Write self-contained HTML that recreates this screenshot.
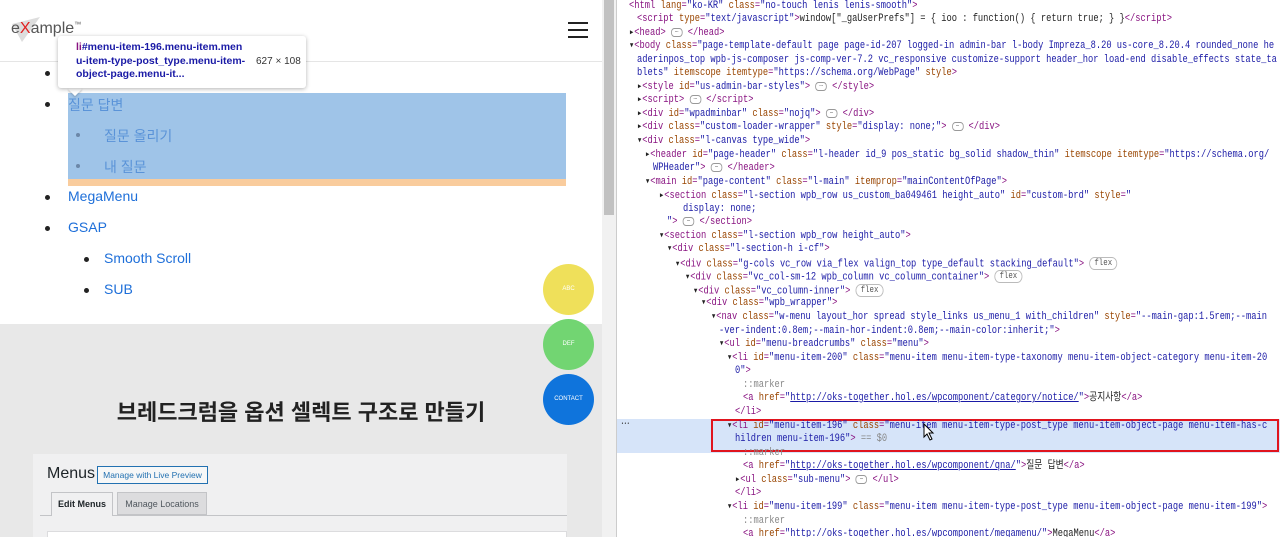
<!DOCTYPE html>
<html><head><meta charset="utf-8"><style>
*{margin:0;padding:0;box-sizing:border-box}
body{width:1280px;height:537px;overflow:hidden;position:relative;background:#fff;font-family:"Liberation Sans","Noto Sans CJK KR",sans-serif}
#left{position:absolute;left:0;top:0;width:602px;height:537px;background:#fff;overflow:hidden}
#sb{position:absolute;left:602px;top:0;width:14px;height:537px;background:#f1f1f1}
#sb div{position:absolute;left:2px;top:0;width:10px;height:215px;background:#c1c1c1}
#dt{position:absolute;left:616px;top:0;width:664px;height:537px;background:#fff;border-left:1px solid #ccc;font-family:"Liberation Mono","Noto Sans CJK KR",monospace;font-size:10.6px;color:#881280;overflow:hidden}
.l{position:absolute;white-space:pre;height:13.6px;line-height:13.6px;transform:scaleX(.825);transform-origin:0 0}
.a{color:#994500}.v{color:#1a1aa6}.t{color:#881280}.k{color:#222}.u{color:#1a1aa6;text-decoration:underline}
.li{position:absolute;left:68px;font-size:14px;color:#1e6fd9}
.bu{position:absolute;width:5px;height:5px;border-radius:50%;background:#222}
.c{position:absolute;width:51px;height:51px;border-radius:50%;color:#fff;font-size:6px;text-align:center;line-height:51px}
.fl{display:inline-block;border:1px solid #bbb;border-radius:8px;font-size:9px;padding:0 5px;line-height:11px;color:#555;vertical-align:middle}
.dots{display:inline-block;width:14px;height:9px;border:1px solid #999;border-radius:4px;font-size:7px;line-height:5px;text-align:center;color:#333;vertical-align:middle}
</style></head><body>
<div id="left">
 <div style="position:absolute;left:0;top:0;width:602px;height:62px;border-bottom:1px solid #e5e5e5"></div>
 <svg style="position:absolute;left:10px;top:16px" width="32" height="28"><polygon points="2,8 30,1 12,26" fill="#ddd"/></svg>
 <div style="position:absolute;left:11px;top:20px;font-size:16px;color:#555">e<span style="color:#e02020">X</span>ample<sup style="font-size:7px">™</sup></div>
 <div style="position:absolute;left:568px;top:22px;width:20px;height:2px;background:#222"></div>
 <div style="position:absolute;left:568px;top:29px;width:20px;height:2px;background:#222"></div>
 <div style="position:absolute;left:568px;top:36px;width:20px;height:2px;background:#222"></div>
 <div style="position:absolute;left:68px;top:93px;width:498px;height:86px;background:#9fc4e8"></div>
 <div style="position:absolute;left:68px;top:179px;width:498px;height:7px;background:#f9cc9d"></div>
 <div class="bu" style="left:45px;top:71px"></div>
 <div class="bu" style="left:45px;top:102px"></div><div class="li" style="top:95px;color:#5a93d8">질문 답변</div>
 <div class="bu" style="left:76px;top:133px;background:#6b87a8;width:4px;height:4px"></div><div class="li" style="left:104px;top:126px;color:#5a93d8">질문 올리기</div>
 <div class="bu" style="left:76px;top:164px;background:#6b87a8;width:4px;height:4px"></div><div class="li" style="left:104px;top:157px;color:#5a93d8">내 질문</div>
 <div class="bu" style="left:45px;top:195px"></div><div class="li" style="top:188px">MegaMenu</div>
 <div class="bu" style="left:45px;top:226px"></div><div class="li" style="top:219px">GSAP</div>
 <div class="bu" style="left:84px;top:257px"></div><div class="li" style="left:104px;top:250px">Smooth Scroll</div>
 <div class="bu" style="left:84px;top:288px"></div><div class="li" style="left:104px;top:281px">SUB</div>
 <div style="position:absolute;left:70px;top:84px;width:10px;height:10px;background:#fff;transform:rotate(45deg);box-shadow:1px 1px 2px rgba(0,0,0,.2)"></div>
 <div style="position:absolute;left:58px;top:36px;width:248px;height:52px;background:#fff;border-radius:3px;box-shadow:0 1px 4px rgba(0,0,0,.3);font-size:10.5px;font-weight:bold;color:#1a1aa6;padding:5px 6px 0 18px;line-height:13.5px;white-space:nowrap">
  <div><span style="color:#881280">li</span>#menu-item-196.menu-item.men<br>u-item-type-post_type.menu-item-<br>object-page.menu-it...</div>
  <div style="position:absolute;left:198px;top:19px;font-weight:normal;color:#333;font-size:10px">627 × 108</div>
 </div>
 <div style="position:absolute;left:0;top:324px;width:602px;height:213px;background:#e8e8e8"></div>
 <div style="position:absolute;left:0;top:395px;width:602px;text-align:center;font-size:22px;font-weight:bold;color:#222">브레드크럼을 옵션 셀렉트 구조로 만들기</div>
 <div style="position:absolute;left:33px;top:454px;width:534px;height:90px;background:#f0f0f1"></div>
 <div style="position:absolute;left:47px;top:465px;font-size:16px;color:#1d2327">Menus</div>
 <div style="position:absolute;left:97px;top:466px;width:111px;height:18px;border:1px solid #2271b1;color:#2271b1;font-size:8.5px;line-height:16px;text-align:center;background:#f6f7f7;white-space:nowrap">Manage with Live Preview</div>
 <div style="position:absolute;left:40px;top:515px;width:527px;height:1px;background:#c3c4c7"></div>
 <div style="position:absolute;left:51px;top:492px;width:62px;height:24px;border:1px solid #c3c4c7;border-bottom:none;background:#f0f0f1;font-size:9px;font-weight:bold;color:#1d2327;text-align:center;line-height:23px;white-space:nowrap">Edit Menus</div>
 <div style="position:absolute;left:117px;top:492px;width:90px;height:23px;border:1px solid #c3c4c7;background:#dcdcde;font-size:9px;color:#50575e;text-align:center;line-height:22px;white-space:nowrap">Manage Locations</div>
 <div style="position:absolute;left:47px;top:531px;width:520px;height:10px;background:#fff;border:1px solid #dcdcde"></div>
 <div class="c" style="left:543px;top:264px;background:#efe05a">ABC</div>
 <div class="c" style="left:543px;top:319px;background:#72d572">DEF</div>
 <div class="c" style="left:543px;top:374px;background:#0f74dc">CONTACT</div>
</div>
<div id="sb"><div></div></div>
<div id="dt">
<div style="position:absolute;left:0;top:419px;width:664px;height:34px;background:#d6e4f9"></div>
<div style="position:absolute;left:94px;top:419px;width:568px;height:33px;border:2px solid #e0141e"></div>
<div class="l" style="left:4px;top:419px;color:#333">⋯</div>
<div class="l" style="left:12px;top:0"><span class="t">&lt;html</span> <span class="a">lang</span>=<span class="v">"ko-KR"</span> <span class="a">class</span>=<span class="v">"no-touch lenis lenis-smooth"</span><span class="t">&gt;</span></div>
<div class="l" style="left:20px;top:13px"><span class="t">&lt;script</span> <span class="a">type</span>=<span class="v">"text/javascript"</span><span class="t">&gt;</span><span class="k">window["_gaUserPrefs"] = { ioo : function() { return true; } }</span><span class="t">&lt;/script&gt;</span></div>
<div class="l" style="left:12px;top:27px"><span class="k">▸</span><span class="t">&lt;head&gt;</span> <span class="dots">…</span> <span class="t">&lt;/head&gt;</span></div>
<div class="l" style="left:12px;top:40px"><span class="k">▾</span><span class="t">&lt;body</span> <span class="a">class</span>=<span class="v">"page-template-default page page-id-207 logged-in admin-bar l-body Impreza_8.20 us-core_8.20.4 rounded_none he</span></div>
<div class="l" style="left:20px;top:54px"><span class="v">aderinpos_top wpb-js-composer js-comp-ver-7.2 vc_responsive customize-support header_hor load-end disable_effects state_ta</span></div>
<div class="l" style="left:20px;top:67px"><span class="v">blets"</span> <span class="a">itemscope</span> <span class="a">itemtype</span>=<span class="v">"https://schema.org/WebPage"</span> <span class="a">style</span><span class="t">&gt;</span></div>
<div class="l" style="left:20px;top:81px"><span class="k">▸</span><span class="t">&lt;style</span> <span class="a">id</span>=<span class="v">"us-admin-bar-styles"</span><span class="t">&gt;</span> <span class="dots">…</span> <span class="t">&lt;/style&gt;</span></div>
<div class="l" style="left:20px;top:94px"><span class="k">▸</span><span class="t">&lt;script&gt;</span> <span class="dots">…</span> <span class="t">&lt;/script&gt;</span></div>
<div class="l" style="left:20px;top:108px"><span class="k">▸</span><span class="t">&lt;div</span> <span class="a">id</span>=<span class="v">"wpadminbar"</span> <span class="a">class</span>=<span class="v">"nojq"</span><span class="t">&gt;</span> <span class="dots">…</span> <span class="t">&lt;/div&gt;</span></div>
<div class="l" style="left:20px;top:121px"><span class="k">▸</span><span class="t">&lt;div</span> <span class="a">class</span>=<span class="v">"custom-loader-wrapper"</span> <span class="a">style</span>=<span class="v">"display: none;"</span><span class="t">&gt;</span> <span class="dots">…</span> <span class="t">&lt;/div&gt;</span></div>
<div class="l" style="left:20px;top:135px"><span class="k">▾</span><span class="t">&lt;div</span> <span class="a">class</span>=<span class="v">"l-canvas type_wide"</span><span class="t">&gt;</span></div>
<div class="l" style="left:28px;top:149px"><span class="k">▸</span><span class="t">&lt;header</span> <span class="a">id</span>=<span class="v">"page-header"</span> <span class="a">class</span>=<span class="v">"l-header id_9 pos_static bg_solid shadow_thin"</span> <span class="a">itemscope</span> <span class="a">itemtype</span>=<span class="v">"https://schema.org/</span></div>
<div class="l" style="left:36px;top:162px"><span class="v">WPHeader"</span><span class="t">&gt;</span> <span class="dots">…</span> <span class="t">&lt;/header&gt;</span></div>
<div class="l" style="left:28px;top:176px"><span class="k">▾</span><span class="t">&lt;main</span> <span class="a">id</span>=<span class="v">"page-content"</span> <span class="a">class</span>=<span class="v">"l-main"</span> <span class="a">itemprop</span>=<span class="v">"mainContentOfPage"</span><span class="t">&gt;</span></div>
<div class="l" style="left:42px;top:190px"><span class="k">▸</span><span class="t">&lt;section</span> <span class="a">class</span>=<span class="v">"l-section wpb_row us_custom_ba049461 height_auto"</span> <span class="a">id</span>=<span class="v">"custom-brd"</span> <span class="a">style</span>=<span class="v">"</span></div>
<div class="l" style="left:66px;top:203px"><span class="v">display: none;</span></div>
<div class="l" style="left:50px;top:216px"><span class="v">"</span><span class="t">&gt;</span> <span class="dots">…</span> <span class="t">&lt;/section&gt;</span></div>
<div class="l" style="left:42px;top:230px"><span class="k">▾</span><span class="t">&lt;section</span> <span class="a">class</span>=<span class="v">"l-section wpb_row height_auto"</span><span class="t">&gt;</span></div>
<div class="l" style="left:50px;top:243px"><span class="k">▾</span><span class="t">&lt;div</span> <span class="a">class</span>=<span class="v">"l-section-h i-cf"</span><span class="t">&gt;</span></div>
<div class="l" style="left:58px;top:257px"><span class="k">▾</span><span class="t">&lt;div</span> <span class="a">class</span>=<span class="v">"g-cols vc_row via_flex valign_top type_default stacking_default"</span><span class="t">&gt;</span> <span class="fl">flex</span></div>
<div class="l" style="left:68px;top:270px"><span class="k">▾</span><span class="t">&lt;div</span> <span class="a">class</span>=<span class="v">"vc_col-sm-12 wpb_column vc_column_container"</span><span class="t">&gt;</span> <span class="fl">flex</span></div>
<div class="l" style="left:76px;top:284px"><span class="k">▾</span><span class="t">&lt;div</span> <span class="a">class</span>=<span class="v">"vc_column-inner"</span><span class="t">&gt;</span> <span class="fl">flex</span></div>
<div class="l" style="left:84px;top:297px"><span class="k">▾</span><span class="t">&lt;div</span> <span class="a">class</span>=<span class="v">"wpb_wrapper"</span><span class="t">&gt;</span></div>
<div class="l" style="left:94px;top:311px"><span class="k">▾</span><span class="t">&lt;nav</span> <span class="a">class</span>=<span class="v">"w-menu layout_hor spread style_links us_menu_1 with_children"</span> <span class="a">style</span>=<span class="v">"--main-gap:1.5rem;--main</span></div>
<div class="l" style="left:102px;top:325px"><span class="v">-ver-indent:0.8em;--main-hor-indent:0.8em;--main-color:inherit;"</span><span class="t">&gt;</span></div>
<div class="l" style="left:102px;top:338px"><span class="k">▾</span><span class="t">&lt;ul</span> <span class="a">id</span>=<span class="v">"menu-breadcrumbs"</span> <span class="a">class</span>=<span class="v">"menu"</span><span class="t">&gt;</span></div>
<div class="l" style="left:110px;top:352px"><span class="k">▾</span><span class="t">&lt;li</span> <span class="a">id</span>=<span class="v">"menu-item-200"</span> <span class="a">class</span>=<span class="v">"menu-item menu-item-type-taxonomy menu-item-object-category menu-item-20</span></div>
<div class="l" style="left:118px;top:365px"><span class="v">0"</span><span class="t">&gt;</span></div>
<div class="l" style="left:126px;top:379px;color:#888">::marker</div>
<div class="l" style="left:126px;top:392px"><span class="t">&lt;a</span> <span class="a">href</span>=<span class="v">"</span><span class="u">http://oks-together.hol.es/wpcomponent/category/notice/</span><span class="v">"</span><span class="t">&gt;</span><span class="k">공지사항</span><span class="t">&lt;/a&gt;</span></div>
<div class="l" style="left:118px;top:406px"><span class="t">&lt;/li&gt;</span></div>
<div class="l" style="left:110px;top:420px"><span class="k">▾</span><span class="t">&lt;li</span> <span class="a">id</span>=<span class="v">"menu-item-196"</span> <span class="a">class</span>=<span class="v">"menu-item menu-item-type-post_type menu-item-object-page menu-item-has-c</span></div>
<div class="l" style="left:118px;top:433px"><span class="v">hildren menu-item-196"</span><span class="t">&gt;</span> <span style="color:#888">== $0</span></div>
<div class="l" style="left:126px;top:447px;color:#888">::marker</div>
<div class="l" style="left:126px;top:460px"><span class="t">&lt;a</span> <span class="a">href</span>=<span class="v">"</span><span class="u">http://oks-together.hol.es/wpcomponent/qna/</span><span class="v">"</span><span class="t">&gt;</span><span class="k">질문 답변</span><span class="t">&lt;/a&gt;</span></div>
<div class="l" style="left:118px;top:474px"><span class="k">▸</span><span class="t">&lt;ul</span> <span class="a">class</span>=<span class="v">"sub-menu"</span><span class="t">&gt;</span> <span class="dots">…</span> <span class="t">&lt;/ul&gt;</span></div>
<div class="l" style="left:118px;top:487px"><span class="t">&lt;/li&gt;</span></div>
<div class="l" style="left:110px;top:501px"><span class="k">▾</span><span class="t">&lt;li</span> <span class="a">id</span>=<span class="v">"menu-item-199"</span> <span class="a">class</span>=<span class="v">"menu-item menu-item-type-post_type menu-item-object-page menu-item-199"</span><span class="t">&gt;</span></div>
<div class="l" style="left:126px;top:515px;color:#888">::marker</div>
<div class="l" style="left:126px;top:528px"><span class="t">&lt;a</span> <span class="a">href</span>=<span class="v">"</span><span class="u">http://oks-together.hol.es/wpcomponent/megamenu/</span><span class="v">"</span><span class="t">&gt;</span><span class="k">MegaMenu</span><span class="t">&lt;/a&gt;</span></div>
<svg style="position:absolute;left:306px;top:423px" width="12" height="18"><path d="M1 1 L1 14 L4 11 L7 17 L9 16 L6 10 L10 10 Z" fill="#fff" stroke="#000" stroke-width="1"/></svg>
</div>
</body></html>
